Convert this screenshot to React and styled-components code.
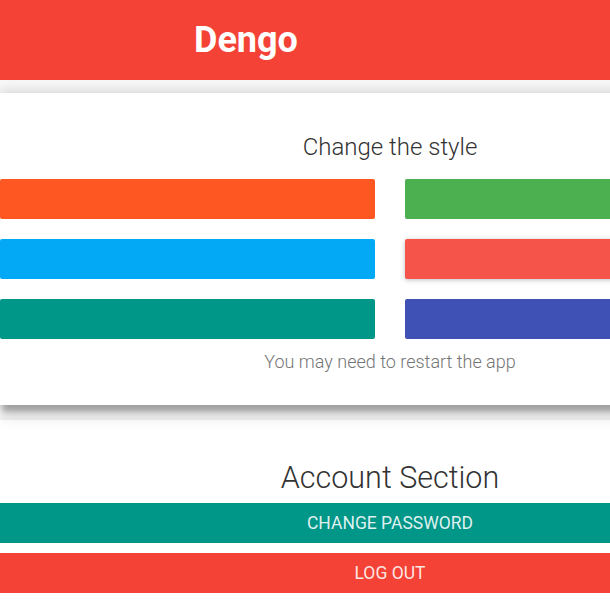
import React from "react";
import styled, { createGlobalStyle } from "styled-components";

const GlobalStyle = createGlobalStyle`
  html, body {
    margin: 0;
    padding: 0;
    background: #f7f7f7;
    font-family: Roboto, "Liberation Sans", sans-serif;
  }
`;

const Page = styled.div`
  width: 780px;
  display: flex;
  flex-direction: column;
`;

const Header = styled.header`
  position: relative;
  z-index: 2;
  height: 80px;
  background: #f44336;
  display: flex;
  align-items: center;
  padding-left: 194px;
`;

const Brand = styled.h1`
  margin: 0;
  color: #fff;
  font-size: 36px;
  font-weight: 700;
  line-height: 1;
`;

const Card = styled.section`
  position: relative;
  z-index: ${({ $layer }) => $layer};
  background: #fff;
  margin-top: ${({ $top }) => $top}px;
  padding: ${({ $pad }) => $pad};
  display: flex;
  flex-direction: column;
  align-items: center;
  box-shadow: ${({ $shadow }) => $shadow};
`;

const Title = styled.h2`
  margin: 0;
  font-size: ${({ $size }) => $size}px;
  line-height: 1.2;
  font-weight: 300;
  color: #333;
`;

const Swatches = styled.div`
  width: 100%;
  display: grid;
  grid-template-columns: 1fr 1fr;
  column-gap: 30px;
  row-gap: 20px;
  margin-top: 17px;
`;

const Swatch = styled.button`
  height: 40px;
  border: none;
  border-radius: 2px;
  background: ${({ $color }) => $color};
  box-shadow: ${({ $selected }) =>
    $selected ? "0 1px 5px rgba(0, 0, 0, 0.25)" : "none"};
  cursor: pointer;
  padding: 0;
`;

const Note = styled.p`
  margin: 12px 0 0;
  font-size: 18px;
  line-height: 1.2;
  font-weight: 300;
  color: #757575;
`;

const ActionButton = styled.button`
  width: 100%;
  height: 40px;
  margin-top: ${({ $gap }) => $gap}px;
  border: none;
  background: ${({ $color }) => $color};
  color: rgba(255, 255, 255, 0.88);
  font-family: Roboto, "Liberation Sans", sans-serif;
  font-size: 17.5px;
  font-weight: 400;
  text-transform: uppercase;
  cursor: pointer;
`;

const swatches = [
  { color: "#ff5722" },
  { color: "#4caf50" },
  { color: "#03a9f4" },
  { color: "#f5544a", selected: true },
  { color: "#009688" },
  { color: "#3f51b5" },
];

export default function App() {
  return (
    <Page>
      <GlobalStyle />
      <Header>
        <Brand>Dengo</Brand>
      </Header>

      <Card
        $layer={1}
        $top={13}
        $pad="40px 0 33px"
        $shadow="0 -3px 10px rgba(0,0,0,0.12), 0 9px 6px -2px rgba(0,0,0,0.28), 0 14px 14px rgba(0,0,0,0.08)"
      >
        <Title $size={24}>Change the style</Title>
        <Swatches>
          {swatches.map((s, i) => (
            <Swatch key={i} $color={s.color} $selected={s.selected} />
          ))}
        </Swatches>
        <Note>You may need to restart the app</Note>
      </Card>

      <Card
        $layer={0}
        $top={15}
        $pad="40px 0 20px"
        $shadow="0 -2px 8px rgba(0,0,0,0.05)"
      >
        <Title $size={30.5}>Account Section</Title>
        <ActionButton $color="#009688" $gap={6}>
          Change Password
        </ActionButton>
        <ActionButton $color="#f44336" $gap={10}>
          Log Out
        </ActionButton>
      </Card>
    </Page>
  );
}
